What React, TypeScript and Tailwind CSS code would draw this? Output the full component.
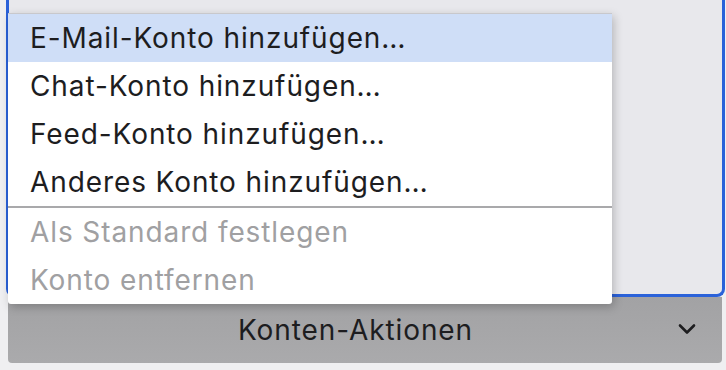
import React from 'react';

const items = [
  { label: 'E-Mail-Konto hinzufügen…', active: true },
  { label: 'Chat-Konto hinzufügen…' },
  { label: 'Feed-Konto hinzufügen…' },
  { label: 'Anderes Konto hinzufügen…' },
];

const disabledItems = ['Als Standard festlegen', 'Konto entfernen'];

const App = () => {
  return (
    <div
      className="relative w-[726px] h-[370px] overflow-hidden bg-[#efeff1]"
      style={{ fontFamily: 'Inter, "Noto Sans", sans-serif' }}
    >
      {/* list panel with focus ring */}
      <div className="ml-[6px] w-[719px] h-[297px] border-x-[3px] border-b-[3px] border-[#2b62d9] rounded-b-[8px] bg-[#e8e8ec]" />

      {/* actions button */}
      <div className="relative ml-[8px] w-[714px] h-[66px] rounded-b-[4px] bg-gradient-to-b from-[#a2a2a4] to-[#aaaaac] flex items-center justify-center">
        <span className="text-[28px] text-[#1d1d1f] tracking-[0.9px] pr-[19px]">Konten-Aktionen</span>
        <svg
          className="absolute right-[26px] top-[26px]"
          width="18"
          height="12"
          viewBox="0 0 18 12"
          fill="none"
        >
          <path d="M2 2.5l7 7 7-7" stroke="#1d1d1f" strokeWidth="2.6" strokeLinecap="round" strokeLinejoin="round" />
        </svg>
      </div>

      {/* dropdown menu */}
      <div className="absolute left-[8px] top-[13px] w-[604px] bg-white border-t border-[#c8c8cc] rounded-b-[3px] shadow-[2px_3px_10px_rgba(0,0,0,0.22)]">
        {items.map((item) => (
          <div
            key={item.label}
            className={`h-[48px] flex items-center pl-[22px] text-[28px] tracking-[0.9px] text-[#1d1d1f] ${item.active ? 'bg-[#cfdef7]' : ''}`}
          >
            {item.label}
          </div>
        ))}
        <div className="h-[2px] bg-[#a9a9ab]" />
        {disabledItems.map((label) => (
          <div key={label} className="h-[48px] flex items-center pl-[22px] text-[28px] tracking-[0.9px] text-[#a0a0a2]">
            {label}
          </div>
        ))}
      </div>
    </div>
  );
};

export default App;
